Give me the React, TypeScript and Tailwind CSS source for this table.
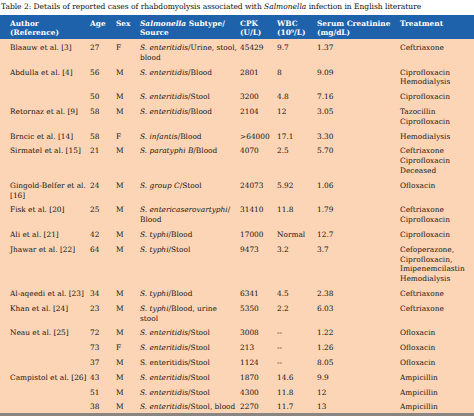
import React from 'react'

type Row = {
  author: React.ReactNode
  age: string
  sex: string
  source: React.ReactNode
  cpk: string
  wbc: string
  creat: string
  treatment: React.ReactNode
}

const S = ({ children }: { children: React.ReactNode }) => <i>{children}</i>

const rows: Row[] = [
  { author: 'Blaauw et al. [3]', age: '27', sex: 'F', source: <><S>S. enteritidis</S>/Urine, stool,<br />blood</>, cpk: '45429', wbc: '9.7', creat: '1.37', treatment: 'Ceftriaxone' },
  { author: 'Abdulla et al. [4]', age: '56', sex: 'M', source: <><S>S. enteritidis</S>/Blood</>, cpk: '2801', wbc: '8', creat: '9.09', treatment: <>Ciprofloxacin<br />Hemodialysis</> },
  { author: '', age: '50', sex: 'M', source: <><S>S. enteritidis</S>/Stool</>, cpk: '3200', wbc: '4.8', creat: '7.16', treatment: 'Ciprofloxacin' },
  { author: 'Retornaz et al. [9]', age: '58', sex: 'M', source: <><S>S. enteritidis</S>/Blood</>, cpk: '2104', wbc: '12', creat: '3.05', treatment: <>Tazocillin<br />Ciprofloxacin</> },
  { author: 'Brncic et al. [14]', age: '58', sex: 'F', source: <><S>S. infantis</S>/Blood</>, cpk: '>64000', wbc: '17.1', creat: '3.30', treatment: 'Hemodialysis' },
  { author: 'Sirmatel et al. [15]', age: '21', sex: 'M', source: <><S>S. paratyphi B</S>/Blood</>, cpk: '4070', wbc: '2.5', creat: '5.70', treatment: <>Ceftriaxone<br />Ciprofloxacin<br />Deceased</> },
  { author: <>Gingold-Belfer et al.<br />[16]</>, age: '24', sex: 'M', source: <><S>S. group C</S>/Stool</>, cpk: '24073', wbc: '5.92', creat: '1.06', treatment: 'Ofloxacin' },
  { author: 'Fisk et al. [20]', age: '25', sex: 'M', source: <><S>S. entericaserovartyphi</S>/<br />Blood</>, cpk: '31410', wbc: '11.8', creat: '1.79', treatment: <>Ceftriaxone<br />Ciprofloxacin</> },
  { author: 'Ali et al. [21]', age: '42', sex: 'M', source: <><S>S. typhi</S>/Blood</>, cpk: '17000', wbc: 'Normal', creat: '12.7', treatment: 'Ciprofloxacin' },
  { author: 'Jhawar et al. [22]', age: '64', sex: 'M', source: <><S>S. typhi</S>/Stool</>, cpk: '9473', wbc: '3.2', creat: '3.7', treatment: <>Cefoperazone,<br />Ciprofloxacin,<br />Imipenemcilastin<br />Hemodialysis</> },
  { author: 'Al-aqeedi et al. [23]', age: '34', sex: 'M', source: <><S>S. typhi</S>/Blood</>, cpk: '6341', wbc: '4.5', creat: '2.38', treatment: 'Ceftriaxone' },
  { author: 'Khan et al. [24]', age: '23', sex: 'M', source: <><S>S. typhi</S>/Blood, urine<br />stool</>, cpk: '5350', wbc: '2.2', creat: '6.03', treatment: 'Ceftriaxone' },
  { author: 'Neau et al. [25]', age: '72', sex: 'M', source: <><S>S. enteritidis</S>/Stool</>, cpk: '3008', wbc: '--', creat: '1.22', treatment: 'Ofloxacin' },
  { author: '', age: '73', sex: 'F', source: <><S>S. enteritidis</S>/Stool</>, cpk: '213', wbc: '--', creat: '1.26', treatment: 'Ofloxacin' },
  { author: '', age: '37', sex: 'M', source: 'S. enteritidis/Stool', cpk: '1124', wbc: '--', creat: '8.05', treatment: 'Ofloxacin' },
  { author: 'Campistol et al. [26]', age: '43', sex: 'M', source: <><S>S. enteritidis</S>/Stool</>, cpk: '1870', wbc: '14.6', creat: '9.9', treatment: 'Ampicillin' },
  { author: '', age: '51', sex: 'M', source: <><S>S. enteritidis</S>/Stool</>, cpk: '4300', wbc: '11.8', creat: '12', treatment: 'Ampicillin' },
  { author: '', age: '38', sex: 'M', source: <><S>S. enteritidis</S>/Stool, blood</>, cpk: '2270', wbc: '11.7', creat: '13', treatment: 'Ampicillin' },
]

const cell = 'p-0 pt-[4px] pb-[1px] align-top text-left whitespace-nowrap font-normal'
const head = 'p-0 pt-[3.5px] pb-[1px] align-top text-left whitespace-nowrap font-bold'

export default function App() {
  return (
    <div className="w-[474px] h-[419px] bg-white overflow-hidden text-[7.4px] leading-[9.8px] text-[#161412]" style={{ fontFamily: '"DejaVu Serif", "Liberation Serif", serif' }}>
      <p className="h-[15px] pl-[1px] pt-[2px] text-[7.5px] leading-[10px] text-[#0d0d0d]">
        Table 2: Details of reported cases of rhabdomyolysis associated with <i>Salmonella</i> infection in English literature
      </p>
      <table className="w-[474px] table-fixed border-collapse">
        <colgroup>
          <col className="w-[90px]" />
          <col className="w-[26px]" />
          <col className="w-[24px]" />
          <col className="w-[100px]" />
          <col className="w-[37px]" />
          <col className="w-[40px]" />
          <col className="w-[83px]" />
          <col className="w-[74px]" />
        </colgroup>
        <thead>
          <tr className="bg-[#1e62ab] text-white">
            <th className={`${head} pl-[10px]`}>Author<br />(Reference)</th>
            <th className={head}>Age</th>
            <th className={head}>Sex</th>
            <th className={head}><i>Salmonella</i> Subtype/<br />Source</th>
            <th className={head}>CPK<br />(U/L)</th>
            <th className={head}>WBC<br />(10⁹/L)</th>
            <th className={head}>Serum Creatinine<br />(mg/dL)</th>
            <th className={head}>Treatment</th>
          </tr>
        </thead>
        <tbody className="bg-[#fcd5b6]">
          {rows.map((r, i) => (
            <tr key={i} className={i === rows.length - 1 ? 'border-b-[3px] border-[#8a8580]' : ''}>
              <td className={`${cell} pl-[10px]`}>{r.author}</td>
              <td className={cell}>{r.age}</td>
              <td className={cell}>{r.sex}</td>
              <td className={cell}>{r.source}</td>
              <td className={cell}>{r.cpk}</td>
              <td className={cell}>{r.wbc}</td>
              <td className={cell}>{r.creat}</td>
              <td className={cell}>{r.treatment}</td>
            </tr>
          ))}
        </tbody>
      </table>
    </div>
  )
}
